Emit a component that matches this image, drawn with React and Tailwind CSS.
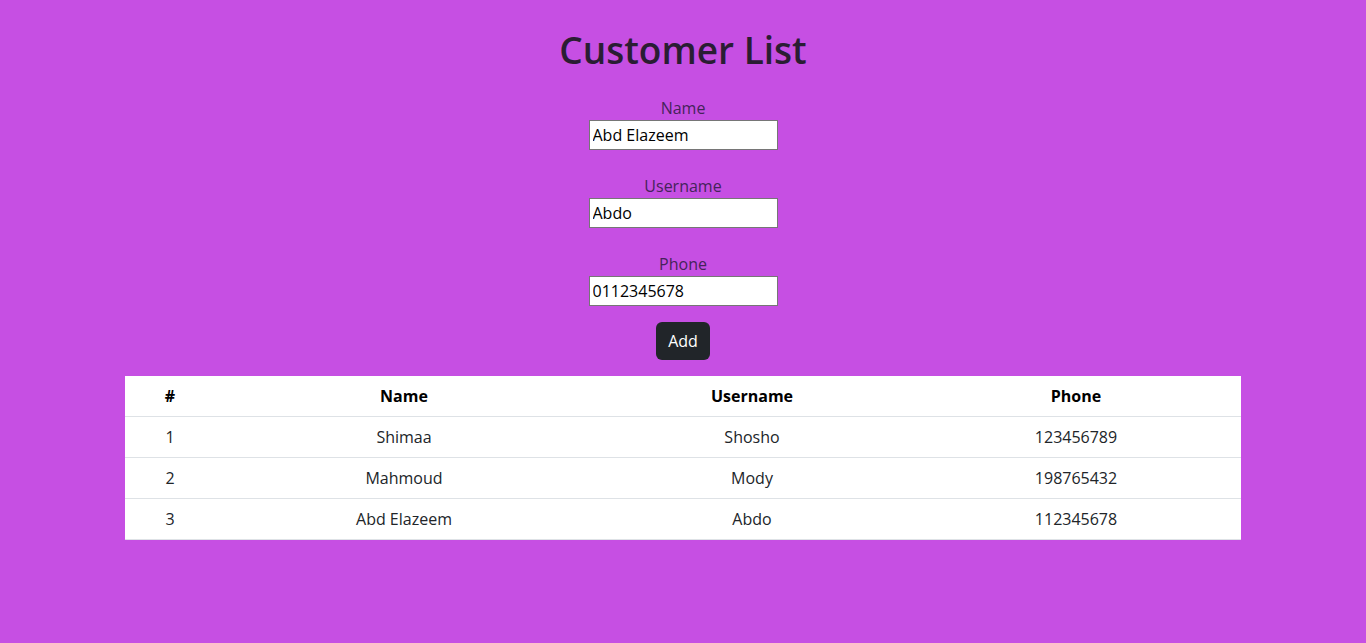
import React from "react";

const rows = [
  ["1", "Shimaa", "Shosho", "123456789"],
  ["2", "Mahmoud", "Mody", "198765432"],
  ["3", "Abd Elazeem", "Abdo", "112345678"],
];

function Field({ label, value }) {
  return (
    <div className="flex flex-col items-center">
      <label className="block h-6 leading-6 text-[16px] text-[#45235a]">{label}</label>
      <input
        readOnly
        value={value}
        className="w-[189px] h-[30px] border border-[#767676] bg-white px-[3px] text-[16px] text-black outline-none"
      />
    </div>
  );
}

export default function App() {
  return (
    <div
      className="min-h-[643px] w-full bg-[#c64fe3] text-[#212529]"
      style={{ fontFamily: '"Open Sans", "Noto Sans", sans-serif' }}
    >
      <div className="mx-auto w-[1140px] px-3 pt-[26px]">
        <h1 className="h-12 text-center text-[37px] leading-[48px] font-semibold text-[#2a1d33]">
          Customer List
        </h1>
        <div className="mt-[22px] flex flex-col items-center gap-6">
          <Field label="Name" value="Abd Elazeem" />
          <Field label="Username" value="Abdo" />
          <Field label="Phone" value="0112345678" />
        </div>
        <div className="mt-4 flex justify-center">
          <button className="h-[38px] rounded-md bg-[#212529] px-3 text-[16px] text-white">Add</button>
        </div>
        <table className="mt-4 w-full table-fixed border-collapse bg-white text-[16px] text-[#212529]">
          <colgroup>
            <col className="w-[90px]" />
            <col className="w-[378px]" />
            <col className="w-[318px]" />
            <col className="w-[330px]" />
          </colgroup>
          <thead>
            <tr className="border-b border-[#dee2e6]">
              {["#", "Name", "Username", "Phone"].map((h) => (
                <th key={h} className="h-10 p-2 text-center font-bold leading-6 text-black">
                  {h}
                </th>
              ))}
            </tr>
          </thead>
          <tbody>
            {rows.map((r) => (
              <tr key={r[0]} className="border-b border-[#dee2e6]">
                {r.map((c, i) => (
                  <td key={i} className="h-10 p-2 text-center leading-6">
                    {c}
                  </td>
                ))}
              </tr>
            ))}
          </tbody>
        </table>
      </div>
    </div>
  );
}
